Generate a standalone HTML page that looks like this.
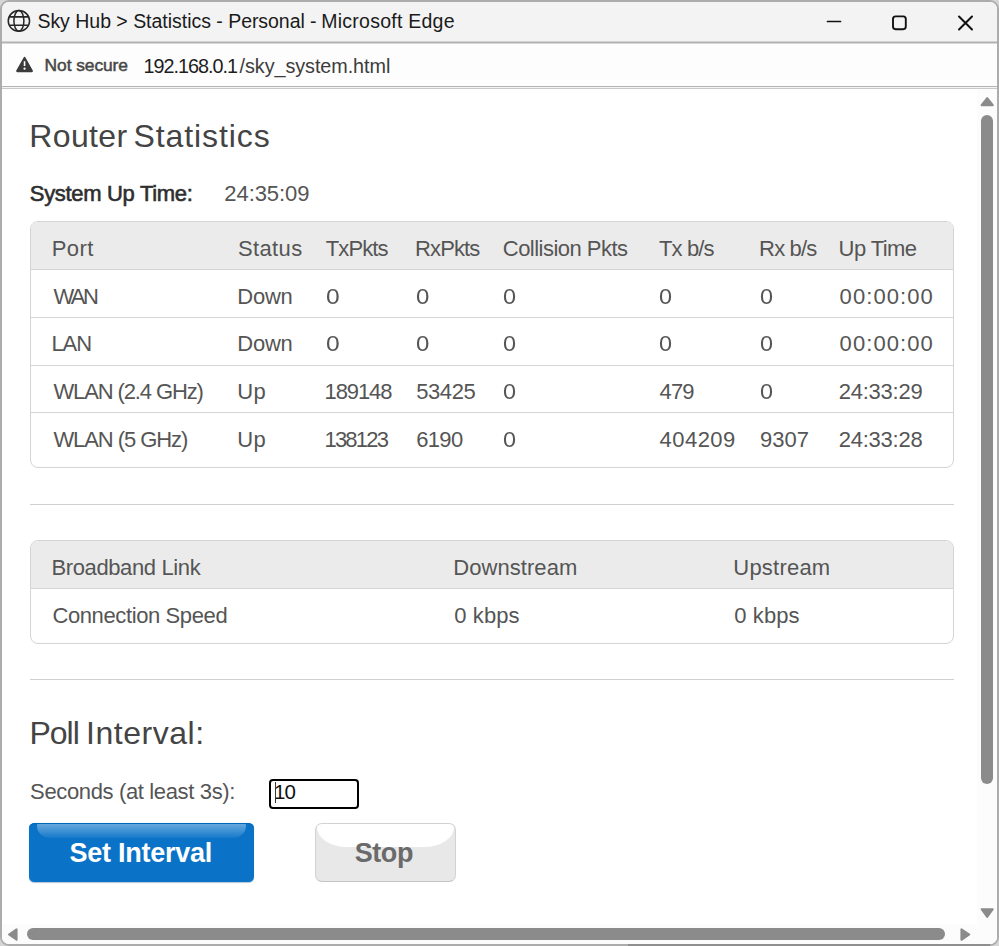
<!DOCTYPE html>
<html lang="en">
<head>
<meta charset="utf-8">
<title>Sky Hub &gt; Statistics</title>
<style>
html,body{margin:0;padding:0;}
body{width:999px;height:946px;overflow:hidden;background:#d6d6d6;position:relative;font-family:"Liberation Sans",sans-serif;color:#4a4a4a;}
.abs{position:absolute;white-space:nowrap;}
#win{position:absolute;left:0;top:0;width:995px;height:942px;border:2px solid #acacac;border-radius:9px;background:#fff;overflow:hidden;}
#bottomstrip{position:absolute;left:628px;top:944px;width:362px;height:2px;background:#8f8f8f;}
#titlebar{position:absolute;left:0;top:0;width:995px;height:39px;background:#f3f3f3;}
#titleline{position:absolute;left:0;top:39px;width:995px;height:3px;background:linear-gradient(#d2d2d2 0,#d2d2d2 1px,#b0b0b0 1px,#b0b0b0 2px,#d8d8d8 2px,#d8d8d8 3px);}
#addr{position:absolute;left:0;top:42px;width:995px;height:42px;background:#fdfdfd;}
#addrline1{position:absolute;left:0;top:84px;width:995px;height:1px;background:#b4b4b4;}
#addrline2{position:absolute;left:0;top:85px;width:995px;height:1px;background:#f4f4f4;}
#addrline3{position:absolute;left:0;top:86px;width:995px;height:1px;background:#c9c9c9;}
.t{position:absolute;white-space:nowrap;line-height:1;}
#vtrack{position:absolute;left:975px;top:87px;width:20px;height:835px;background:#fcfcfc;}
#htrack{position:absolute;left:0;top:922px;width:995px;height:20px;background:#fcfcfc;}
#vthumb{position:absolute;left:979px;top:113px;width:12px;height:669px;border-radius:6px;background:#8b8b8b;}
#hthumb{position:absolute;left:25px;top:926px;width:918px;height:12px;border-radius:6px;background:#8b8b8b;}
.box{position:absolute;left:28px;width:922px;border:1px solid #d4d4d4;border-radius:8px;background:#fff;overflow:hidden;}
.box .hd{position:absolute;left:0;top:0;width:100%;background:#ebebeb;}
.box .ln{position:absolute;left:0;width:100%;height:1px;background:#d4d4d4;}
.hr{position:absolute;left:28px;width:924px;height:1px;background:#d0d0d0;}
#inp{position:absolute;left:267px;top:776.5px;width:86px;height:26.5px;border:2px solid #000;border-radius:4px;background:#fff;}
#caret{position:absolute;left:273px;top:780px;width:1.3px;height:21px;background:#3a3a3a;}
#b1{position:absolute;left:27.3px;top:820.9px;width:224.5px;height:59.4px;border-radius:5.5px;background:#0a73c8;overflow:hidden;box-shadow:inset 0 1px 0 #0068b8,0 0.5px 1px rgba(0,60,120,.3);}
#b1 .gl{position:absolute;left:7.8px;top:1.2px;width:208.9px;height:13.6px;border-radius:1px 1px 13px 13px/1px 1px 12px 12px;background:linear-gradient(rgba(255,255,255,.38),rgba(255,255,255,.05));filter:blur(.5px);}
#b2{position:absolute;left:312.6px;top:821px;width:139.2px;height:56.8px;border:1px solid #d2d2d2;border-bottom-color:#c4c4c4;border-radius:7px;background:#e8e8e8;overflow:hidden;}
#b2 .gl{position:absolute;left:1px;top:-24px;width:137.2px;height:47px;border-radius:0 0 30px 30px/0 0 20px 20px;background:#fff;filter:blur(.4px);}
</style>
</head>
<body>
<div id="win">
  <div id="titlebar"></div>
  <div id="titleline"></div>
  <div id="addr"></div>
  <div id="addrline1"></div><div id="addrline2"></div><div id="addrline3"></div>

  <!-- globe icon -->
  <svg class="abs" style="left:4px;top:6px" width="26" height="26" viewBox="0 0 26 26" fill="none" stroke="#262626" stroke-width="1.5">
    <ellipse cx="12.9" cy="12.9" rx="10.65" ry="10.3"/>
    <ellipse cx="12.9" cy="12.9" rx="5" ry="10.3"/>
    <path d="M3.4 8.8H22.4" stroke-width="1.8"/>
    <path d="M3.4 17.3H22.4" stroke-width="1.5"/>
  </svg>

  <!-- window controls -->
  <svg class="abs" style="left:820px;top:8px" width="160" height="28" viewBox="0 0 160 28" fill="none" stroke="#111" stroke-width="1.7" stroke-linecap="round">
    <path d="M5.5 11.5H18.5"/>
    <rect x="71" y="6.4" width="12.8" height="12.8" rx="2.6" stroke-width="1.9"/>
    <path d="M137 6.5L150 19.5M150 6.5L137 19.5" stroke-width="2"/>
  </svg>

  <!-- address bar -->
  <svg class="abs" style="left:13px;top:53px" width="20" height="19" viewBox="0 0 20 19">
    <path d="M9.55 2.9 L16.9 16.1 H2.2 Z" fill="#3b3b3b" stroke="#3b3b3b" stroke-width="2.1" stroke-linejoin="round"/>
    <rect x="8.75" y="6.2" width="1.6" height="4.8" fill="#fff"/>
    <circle cx="9.55" cy="13.7" r="1.1" fill="#fff"/>
  </svg>

  <!-- page content -->

  <div class="box" id="tbl1" style="top:219px;height:245px;">
    <div class="hd" style="height:47px"></div>
    <div class="ln" style="top:47px"></div>
    <div class="ln" style="top:95px"></div>
    <div class="ln" style="top:143px"></div>
    <div class="ln" style="top:190px"></div>
  </div>

  <div class="hr" style="top:502px"></div>

  <div class="box" id="tbl2" style="top:538px;height:102px;">
    <div class="hd" style="height:47px"></div>
    <div class="ln" style="top:47px"></div>
  </div>

  <div class="hr" style="top:677px"></div>

  <!-- input -->
  <div id="inp"></div>
  <div id="caret"></div>
  <div class="t" id="inpv" style="left:272px;top:779.5px;font-size:20.5px;color:#111;letter-spacing:-1px;">10</div>
  <!-- buttons -->
  <div id="b1"><div class="gl"></div></div>
  <div id="b2"><div class="gl"></div></div>
  <div class="t" id="title1" style="left:35.4px;top:10px;font-size:19.5px;letter-spacing:-0.018px;color:#1b1b1b;">Sky Hub &gt; Statistics -</div>
  <div class="t" id="title2" style="left:226.2px;top:10px;font-size:19.5px;letter-spacing:-0.056px;color:#1b1b1b;">Personal -</div>
  <div class="t" id="title3" style="left:319.3px;top:10px;font-size:19.5px;letter-spacing:0.247px;color:#1b1b1b;">Microsoft Edge</div>
  <div class="t" id="notsecure" style="left:42.6px;top:55px;font-size:17.4px;letter-spacing:-0.078px;-webkit-text-stroke:0.5px;color:#474747;">Not secure</div>
  <div class="t" id="url1" style="left:141.5px;top:55px;font-size:19.8px;letter-spacing:-0.99px;color:#1e1e1e;">192.168.0.1</div>
  <div class="t" id="url2" style="left:237.6px;top:55px;font-size:19.8px;letter-spacing:-0.067px;color:#3c3c3c;">/sky_system.html</div>
  <div class="t" id="h1a" style="left:27.3px;top:118px;font-size:32px;letter-spacing:0.34px;color:#444;">Router</div>
  <div class="t" id="h1b" style="left:131.6px;top:118px;font-size:32px;letter-spacing:0.889px;color:#444;">Statistics</div>
  <div class="t" id="sut" style="left:27.8px;top:181px;font-size:22px;letter-spacing:-0.315px;-webkit-text-stroke:0.6px;color:#2e2e2e;">System Up Time:</div>
  <div class="t" id="sutv" style="left:222.3px;top:181px;font-size:22px;letter-spacing:-0.071px;color:#555;">24:35:09</div>
  <div class="t" id="c_port" style="left:49.7px;top:236px;font-size:22px;letter-spacing:0.466px;color:#555;">Port</div>
  <div class="t" id="c_status" style="left:236.0px;top:236px;font-size:22px;letter-spacing:0.36px;color:#555;">Status</div>
  <div class="t" id="c_tx" style="left:323.8px;top:236px;font-size:22px;letter-spacing:-0.92px;color:#555;">TxPkts</div>
  <div class="t" id="c_rx" style="left:413.0px;top:236px;font-size:22px;letter-spacing:-0.88px;color:#555;">RxPkts</div>
  <div class="t" id="c_col" style="left:500.8px;top:236px;font-size:22px;letter-spacing:-0.523px;color:#555;">Collision Pkts</div>
  <div class="t" id="c_txb" style="left:656.9px;top:236px;font-size:22px;letter-spacing:-0.84px;color:#555;">Tx b/s</div>
  <div class="t" id="c_rxb" style="left:757.1px;top:236px;font-size:22px;letter-spacing:-0.84px;color:#555;">Rx b/s</div>
  <div class="t" id="c_up" style="left:836.6px;top:236px;font-size:22px;letter-spacing:-0.583px;color:#555;">Up Time</div>
  <div class="t" id="r1_0" style="left:51.4px;top:284px;font-size:22px;letter-spacing:-2.55px;color:#555;">WAN</div>
  <div class="t" id="r1_1" style="left:235.3px;top:284px;font-size:22px;letter-spacing:-0.267px;color:#555;">Down</div>
  <div class="t" id="r1_2" style="left:323.5px;top:284px;font-size:22px;color:#555;transform:scaleX(1.118);transform-origin:1px 50%;">0</div>
  <div class="t" id="r1_3" style="left:414.2px;top:284px;font-size:22px;color:#555;transform:scaleX(1.091);transform-origin:1px 50%;">0</div>
  <div class="t" id="r1_4" style="left:501.3px;top:284px;font-size:22px;color:#555;transform:scaleX(1.064);transform-origin:1px 50%;">0</div>
  <div class="t" id="r1_5" style="left:656.5px;top:284px;font-size:22px;color:#555;transform:scaleX(1.064);transform-origin:1px 50%;">0</div>
  <div class="t" id="r1_6" style="left:758.1px;top:284px;font-size:22px;color:#555;transform:scaleX(1.064);transform-origin:1px 50%;">0</div>
  <div class="t" id="r1_7" style="left:837.6px;top:284px;font-size:22px;letter-spacing:1.071px;color:#555;">00:00:00</div>
  <div class="t" id="r2_0" style="left:49.4px;top:331px;font-size:22px;letter-spacing:-1.05px;color:#555;">LAN</div>
  <div class="t" id="r2_1" style="left:235.3px;top:331px;font-size:22px;letter-spacing:-0.267px;color:#555;">Down</div>
  <div class="t" id="r2_2" style="left:323.5px;top:331px;font-size:22px;color:#555;transform:scaleX(1.118);transform-origin:1px 50%;">0</div>
  <div class="t" id="r2_3" style="left:414.2px;top:331px;font-size:22px;color:#555;transform:scaleX(1.091);transform-origin:1px 50%;">0</div>
  <div class="t" id="r2_4" style="left:501.3px;top:331px;font-size:22px;color:#555;transform:scaleX(1.064);transform-origin:1px 50%;">0</div>
  <div class="t" id="r2_5" style="left:656.5px;top:331px;font-size:22px;color:#555;transform:scaleX(1.064);transform-origin:1px 50%;">0</div>
  <div class="t" id="r2_6" style="left:758.1px;top:331px;font-size:22px;color:#555;transform:scaleX(1.064);transform-origin:1px 50%;">0</div>
  <div class="t" id="r2_7" style="left:837.6px;top:331px;font-size:22px;letter-spacing:1.071px;color:#555;">00:00:00</div>
  <div class="t" id="r3_0" style="left:51.4px;top:379px;font-size:22px;letter-spacing:-1.115px;color:#555;">WLAN (2.4 GHz)</div>
  <div class="t" id="r3_1" style="left:235.3px;top:379px;font-size:22px;letter-spacing:0.4px;color:#555;">Up</div>
  <div class="t" id="r3_2" style="left:322.5px;top:379px;font-size:22px;letter-spacing:-1.08px;color:#555;">189148</div>
  <div class="t" id="r3_3" style="left:414.2px;top:379px;font-size:22px;letter-spacing:-0.4px;color:#555;">53425</div>
  <div class="t" id="r3_4" style="left:501.3px;top:379px;font-size:22px;color:#555;transform:scaleX(1.064);transform-origin:1px 50%;">0</div>
  <div class="t" id="r3_5" style="left:657.5px;top:379px;font-size:22px;letter-spacing:-0.85px;color:#555;">479</div>
  <div class="t" id="r3_6" style="left:758.1px;top:379px;font-size:22px;color:#555;transform:scaleX(1.064);transform-origin:1px 50%;">0</div>
  <div class="t" id="r3_7" style="left:836.7px;top:379px;font-size:22px;letter-spacing:-0.243px;color:#555;">24:33:29</div>
  <div class="t" id="r4_0" style="left:51.4px;top:427px;font-size:22px;letter-spacing:-1.074px;color:#555;">WLAN (5 GHz)</div>
  <div class="t" id="r4_1" style="left:235.3px;top:427px;font-size:22px;letter-spacing:0.4px;color:#555;">Up</div>
  <div class="t" id="r4_2" style="left:322.5px;top:427px;font-size:22px;letter-spacing:-1.8px;color:#555;">138123</div>
  <div class="t" id="r4_3" style="left:414.2px;top:427px;font-size:22px;letter-spacing:-0.667px;color:#555;">6190</div>
  <div class="t" id="r4_4" style="left:501.3px;top:427px;font-size:22px;color:#555;transform:scaleX(1.064);transform-origin:1px 50%;">0</div>
  <div class="t" id="r4_5" style="left:657.5px;top:427px;font-size:22px;letter-spacing:0.48px;color:#555;">404209</div>
  <div class="t" id="r4_6" style="left:758.1px;top:427px;font-size:22px;letter-spacing:0.0px;color:#555;">9307</div>
  <div class="t" id="r4_7" style="left:836.7px;top:427px;font-size:22px;letter-spacing:-0.243px;color:#555;">24:33:28</div>
  <div class="t" id="b_0" style="left:49.4px;top:555px;font-size:22px;letter-spacing:-0.369px;color:#555;">Broadband Link</div>
  <div class="t" id="b_1" style="left:451.3px;top:555px;font-size:22px;letter-spacing:0.056px;color:#555;">Downstream</div>
  <div class="t" id="b_2" style="left:731.3px;top:555px;font-size:22px;letter-spacing:0.214px;color:#555;">Upstream</div>
  <div class="t" id="b_3" style="left:50.4px;top:603px;font-size:22px;letter-spacing:-0.386px;color:#555;">Connection Speed</div>
  <div class="t" id="b_4" style="left:452.3px;top:603px;font-size:22px;letter-spacing:0.1px;color:#555;">0 kbps</div>
  <div class="t" id="b_5" style="left:732.3px;top:603px;font-size:22px;letter-spacing:0.1px;color:#555;">0 kbps</div>
  <div class="t" id="h2a" style="left:27.6px;top:715px;font-size:32px;letter-spacing:-1.066px;color:#444;">Poll</div>
  <div class="t" id="h2b" style="left:84px;top:715px;font-size:32px;letter-spacing:0.525px;color:#444;">Interval:</div>
  <div class="t" id="secs" style="left:28.1px;top:779px;font-size:22px;letter-spacing:-0.357px;color:#555;">Seconds (at least 3s):</div>
  <div class="t" id="btn1" style="left:67.4px;top:838px;font-size:27px;letter-spacing:-0.246px;font-weight:bold;color:#fff;">Set Interval</div>
  <div class="t" id="btn2" style="left:352.8px;top:838px;font-size:27px;letter-spacing:-0.467px;font-weight:bold;color:#6a6a6a;">Stop</div>
  <!-- scrollbars -->
  <div id="vtrack"></div>
  <div id="htrack"></div>
  <div id="vthumb"></div>
  <div id="hthumb"></div>
  <svg class="abs" style="left:0;top:0" width="995" height="942" viewBox="2 2 995 942" fill="#8b8b8b" stroke="#8b8b8b" stroke-width="2" stroke-linejoin="round">
    <path d="M987.2 98 L992.8 105.2 H981.6 Z"/>
    <path d="M987.2 917 L992.8 909.2 H981.6 Z"/>
    <path d="M9 934.5 L16.6 929.4 V939.8 Z"/>
    <path d="M969.3 934.5 L961.4 929.4 V939.8 Z"/>
  </svg>
</div>
<div id="bottomstrip"></div>
</body>
</html>
